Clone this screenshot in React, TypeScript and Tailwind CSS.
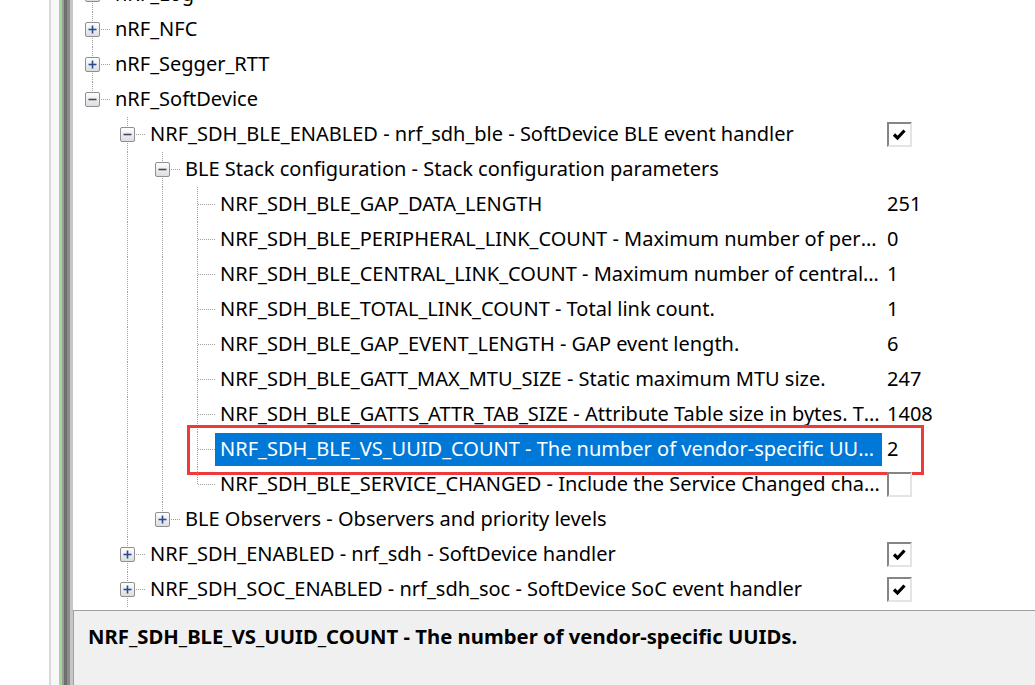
type Value = { kind: 'text'; text: string } | { kind: 'check'; checked: boolean } | null;

interface Row {
  level: number;
  guides: boolean[]; // vertical line in each indent column
  expander: 'plus' | 'minus' | null;
  last: boolean;
  label: string;
  value: Value;
  selected?: boolean;
}

const txt = (text: string): Value => ({ kind: 'text', text });
const chk = (checked: boolean): Value => ({ kind: 'check', checked });

const L3 = [false, true, true];

const rows: Row[] = [
  { level: 0, guides: [], expander: 'plus', last: false, label: 'nRF_Log', value: null },
  { level: 0, guides: [], expander: 'plus', last: false, label: 'nRF_NFC', value: null },
  { level: 0, guides: [], expander: 'plus', last: false, label: 'nRF_Segger_RTT', value: null },
  { level: 0, guides: [], expander: 'minus', last: true, label: 'nRF_SoftDevice', value: null },
  {
    level: 1,
    guides: [false],
    expander: 'minus',
    last: false,
    label: 'NRF_SDH_BLE_ENABLED - nrf_sdh_ble - SoftDevice BLE event handler',
    value: chk(true),
  },
  {
    level: 2,
    guides: [false, true],
    expander: 'minus',
    last: false,
    label: 'BLE Stack configuration - Stack configuration parameters',
    value: null,
  },
  { level: 3, guides: L3, expander: null, last: false, label: 'NRF_SDH_BLE_GAP_DATA_LENGTH', value: txt('251') },
  {
    level: 3,
    guides: L3,
    expander: null,
    last: false,
    label: 'NRF_SDH_BLE_PERIPHERAL_LINK_COUNT - Maximum number of peripheral links.',
    value: txt('0'),
  },
  {
    level: 3,
    guides: L3,
    expander: null,
    last: false,
    label: 'NRF_SDH_BLE_CENTRAL_LINK_COUNT - Maximum number of central links.',
    value: txt('1'),
  },
  {
    level: 3,
    guides: L3,
    expander: null,
    last: false,
    label: 'NRF_SDH_BLE_TOTAL_LINK_COUNT - Total link count.',
    value: txt('1'),
  },
  {
    level: 3,
    guides: L3,
    expander: null,
    last: false,
    label: 'NRF_SDH_BLE_GAP_EVENT_LENGTH - GAP event length.',
    value: txt('6'),
  },
  {
    level: 3,
    guides: L3,
    expander: null,
    last: false,
    label: 'NRF_SDH_BLE_GATT_MAX_MTU_SIZE - Static maximum MTU size.',
    value: txt('247'),
  },
  {
    level: 3,
    guides: L3,
    expander: null,
    last: false,
    label: 'NRF_SDH_BLE_GATTS_ATTR_TAB_SIZE - Attribute Table size in bytes. The size must be a multiple of 4.',
    value: txt('1408'),
  },
  {
    level: 3,
    guides: L3,
    expander: null,
    last: false,
    label: 'NRF_SDH_BLE_VS_UUID_COUNT - The number of vendor-specific UUIDs.',
    value: txt('2'),
    selected: true,
  },
  {
    level: 3,
    guides: L3,
    expander: null,
    last: true,
    label: 'NRF_SDH_BLE_SERVICE_CHANGED - Include the Service Changed characteristic in the Attribute Table.',
    value: chk(false),
  },
  {
    level: 2,
    guides: [false, true],
    expander: 'plus',
    last: true,
    label: 'BLE Observers - Observers and priority levels',
    value: null,
  },
  {
    level: 1,
    guides: [false],
    expander: 'plus',
    last: false,
    label: 'NRF_SDH_ENABLED - nrf_sdh - SoftDevice handler',
    value: chk(true),
  },
  {
    level: 1,
    guides: [false],
    expander: 'plus',
    last: false,
    label: 'NRF_SDH_SOC_ENABLED - nrf_sdh_soc - SoftDevice SoC event handler',
    value: chk(true),
  },
];

const LINE = '#a0a0a0';

const Guide = ({ on }: { on: boolean }) => (
  <svg width="35" height="35" className="shrink-0" shapeRendering="crispEdges">
    {on && <line x1="17.5" y1="0" x2="17.5" y2="35" stroke={LINE} strokeDasharray="1 1" />}
  </svg>
);

const Expander = ({ kind, last }: { kind: 'plus' | 'minus' | null; last: boolean }) => (
  <svg width="35" height="35" className="shrink-0">
    <g shapeRendering="crispEdges">
      <line x1="17.5" y1="0" x2="17.5" y2={last ? 17.5 : 35} stroke={LINE} strokeDasharray="1 1" />
      <line x1="18" y1="17.5" x2="35" y2="17.5" stroke={LINE} strokeDasharray="1 1" />
    </g>
    {kind && (
      <>
        <defs>
          <linearGradient id="exp" x1="0" y1="0" x2="0" y2="1">
            <stop offset="0" stopColor="#ffffff" />
            <stop offset="1" stopColor="#dcdcdc" />
          </linearGradient>
        </defs>
        <rect x="10.5" y="10.5" width="14" height="14" rx="1.5" fill="url(#exp)" stroke="#8f8f8f" />
        <line x1="13.5" y1="17.5" x2="21.5" y2="17.5" stroke={kind === 'plus' ? '#2a4b93' : '#3d4766'} strokeWidth="1.6" />
        {kind === 'plus' && <line x1="17.5" y1="13.5" x2="17.5" y2="21.5" stroke="#2a4b93" strokeWidth="1.6" />}
      </>
    )}
  </svg>
);

const CheckBox = ({ checked }: { checked: boolean }) => (
  <div className="w-[25px] h-[25px] bg-white border-2 border-t-[#858585] border-l-[#858585] border-b-[#e4e4e4] border-r-[#e4e4e4] flex items-center justify-center">
    {checked && (
      <svg width="15" height="13" viewBox="0 0 15 13" className="-ml-[1px]">
        <path d="M2 6.5 L5.5 10 L12.5 2.5" fill="none" stroke="#000" strokeWidth="3.2" />
      </svg>
    )}
  </div>
);

export default function App() {
  return (
    <div className="w-[1035px] h-[685px] flex bg-white overflow-hidden text-black font-['Noto_Sans','Open_Sans',sans-serif] text-[20px]">
      {/* window edge on the left */}
      <div className="w-[73px] shrink-0 flex">
        <div className="w-[49px] bg-white" />
        <div className="w-[2px] bg-[#dadada]" />
        <div className="w-[8px] bg-[#f8f8f8]" />
        <div className="w-[3px] bg-[#a5d896]" />
        <div className="w-[2px] bg-[#9c9c9c]" />
        <div className="w-[3px] bg-[#6e6e6e]" />
        <div className="w-[3px] bg-[#8b8b8b]" />
        <div className="w-[3px] bg-[#c6c6c6]" />
      </div>

      <div className="flex-1 flex flex-col min-w-0">
        {/* tree */}
        <div className="h-[610px] shrink-0 overflow-hidden pl-[2px]">
          <div className="-mt-[23px]">
            {rows.map((r, i) => (
              <div key={i} className="relative flex h-[35px] items-center">
                <div className="flex w-[807px] shrink-0 h-full items-center min-w-0">
                  {r.guides.map((g, j) => (
                    <Guide key={j} on={g} />
                  ))}
                  <Expander kind={r.expander} last={r.last} />
                  <span
                    className={
                      r.selected
                        ? 'min-w-0 truncate h-[33px] leading-[31px] pb-[2px] pl-[5px] pr-[2px] bg-[#0078d7] text-white'
                        : 'min-w-0 truncate leading-[28px] mb-[2px] pl-[5px] pr-[2px]'
                    }
                  >
                    {r.label}
                  </span>
                </div>
                <div className="flex-1 pl-[5px] flex items-center">
                  {r.value?.kind === 'text' && <span className="leading-[28px] mb-[2px]">{r.value.text}</span>}
                  {r.value?.kind === 'check' && <CheckBox checked={r.value.checked} />}
                </div>
                {r.selected && (
                  <div className="absolute left-[112px] -top-[7px] w-[737px] h-[50px] border-[3px] border-[#ee3a3a] pointer-events-none" />
                )}
              </div>
            ))}
          </div>
        </div>

        {/* description panel */}
        <div className="flex-1 bg-[#f0f0f0] border-t border-l border-[#a0a0a0] pl-[14px] pt-[12px]">
          <div className="font-bold text-[20.3px] leading-[26px]">NRF_SDH_BLE_VS_UUID_COUNT - The number of vendor-specific UUIDs.</div>
        </div>
      </div>
    </div>
  );
}
